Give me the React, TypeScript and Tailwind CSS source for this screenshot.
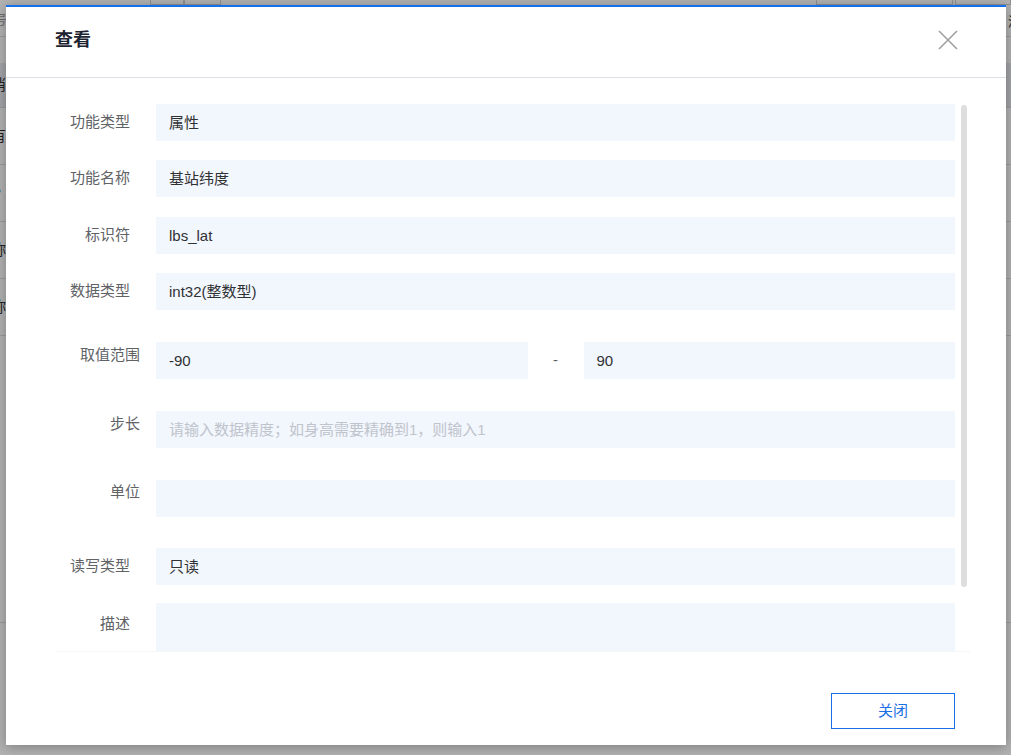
import React from "react";

const font = "font-['Liberation_Sans','Noto_Sans_CJK_SC',sans-serif]";

function Field({ children, placeholder }: { children?: React.ReactNode; placeholder?: string }) {
  return (
    <div className="flex-1 h-[37px] bg-[#f2f6fd] flex items-center pl-[13px] text-[15px] text-[#303133] leading-none">
      {children ? children : <span className="text-[#c0c4cc]">{placeholder}</span>}
    </div>
  );
}

function Row({
  label,
  labelPt,
  wide,
  mt,
  children,
}: {
  label: string;
  labelPt: string;
  wide?: boolean;
  mt: string;
  children: React.ReactNode;
}) {
  return (
    <div className={`flex items-start ${mt}`}>
      <div
        className={`w-[101px] shrink-0 text-right text-[15px] leading-[20px] text-[#606266] ${labelPt} ${
          wide ? "pr-[16px]" : "pr-[26px]"
        }`}
      >
        {label}
      </div>
      <div className="flex-1 flex">{children}</div>
    </div>
  );
}

function BackgroundPage() {
  const rows = [0, 1, 2, 3, 4];
  const texts = ["消", "有", "P", "妳", "妳"];
  return (
    <div className="w-full h-full bg-white flex flex-col">
      <div className="h-[37px] border-b border-[#dcdfe6] flex items-start relative">
        <div className="absolute left-0 top-[10px] -ml-[6px] text-[13px] text-[#999]">号</div>
        <div className="ml-[150px] w-[34px] h-[5px] border border-[#d0d0d0] border-t-0 mt-0" />
        <div className="w-[37px] h-[5px] border border-[#d0d0d0] border-t-0" />
        <div className="ml-auto w-[137px] h-[5px] border border-[#d0d0d0] border-t-0" />
        <div className="ml-[2px] w-[56px] h-[5px] border border-[#d0d0d0] border-t-0" />
        <div className="absolute right-[-10px] top-[12px] text-[13px] text-[#333]">添</div>
      </div>
      <div className="h-[26px]" />
      <div className="h-[45px] bg-[#e9ebef] border-b border-[#dcdfe6] flex items-center">
        <span className="-ml-[9px] text-[15px] text-[#303133]">消</span>
      </div>
      {rows.slice(1).map((i) => (
        <div key={i} className="h-[57px] border-b border-[#dcdfe6] flex items-center">
          <span className="-ml-[9px] text-[15px] text-[#303133]">{texts[i]}</span>
        </div>
      ))}
      <div className="h-[287px] border-b border-[#dcdfe6]" />
    </div>
  );
}

export default function App() {
  return (
    <div className={`relative w-[1011px] h-[755px] overflow-hidden ${font}`}>
      <BackgroundPage />
      <div className="absolute inset-0 bg-black/30" />
      <div className="absolute left-[6px] top-[5px] w-[1000px] h-[740px] bg-white border-t-2 border-[#1570f0] shadow-[0_2px_12px_rgba(0,0,0,0.3)] flex flex-col">
        <div className="h-[70px] shrink-0 flex items-center justify-between pl-[49px] pr-[48px] border-b border-[#dcdfe6] box-content">
          <div className="text-[18px] font-bold text-[#1d2330] -mt-[4px]">查看</div>
          <svg width="20" height="20" viewBox="0 0 20 20" className="-mt-[4px]">
            <path d="M1 1 L19 19 M19 1 L1 19" stroke="#a0a0a0" strokeWidth="1.6" fill="none" />
          </svg>
        </div>
        <div className="mt-[26px] ml-[49px] w-[915px] h-[548px] relative overflow-hidden shrink-0 border-b border-[#f6f6f6]">
          <div className="pr-[15px]">
            <Row label="功能类型" labelPt="pt-[8px]" mt="mt-0">
              <Field>属性</Field>
            </Row>
            <Row label="功能名称" labelPt="pt-[8px]" mt="mt-[19px]">
              <Field>基站纬度</Field>
            </Row>
            <Row label="标识符" labelPt="pt-[8px]" mt="mt-[20px]">
              <Field>lbs_lat</Field>
            </Row>
            <Row label="数据类型" labelPt="pt-[8px]" mt="mt-[19px]">
              <Field>int32(整数型)</Field>
            </Row>
            <Row label="取值范围" labelPt="pt-[3px]" wide mt="mt-[32px]">
              <Field>-90</Field>
              <div className="w-[56px] h-[37px] flex items-center justify-center text-[15px] text-[#606266]">-</div>
              <Field>90</Field>
            </Row>
            <Row label="步长" labelPt="pt-[3px]" wide mt="mt-[32px]">
              <Field placeholder="请输入数据精度；如身高需要精确到1，则输入1" />
            </Row>
            <Row label="单位" labelPt="pt-[2px]" wide mt="mt-[32px]">
              <Field />
            </Row>
            <Row label="读写类型" labelPt="pt-[8px]" mt="mt-[31px]">
              <Field>只读</Field>
            </Row>
            <Row label="描述" labelPt="pt-[11px]" mt="mt-[18px]">
              <div className="flex-1 h-[64px] bg-[#f2f6fd]" />
            </Row>
          </div>
          <div className="absolute right-[3px] top-[1px] w-[6px] h-[482px] rounded-full bg-[#dedede]" />
        </div>
        <div className="mt-[41px] flex justify-end pr-[51px]">
          <button className="w-[124px] h-[36px] border border-[#1a6fe6] text-[#1a6fe6] text-[15px] bg-white flex items-center justify-center">
            关闭
          </button>
        </div>
      </div>
    </div>
  );
}
